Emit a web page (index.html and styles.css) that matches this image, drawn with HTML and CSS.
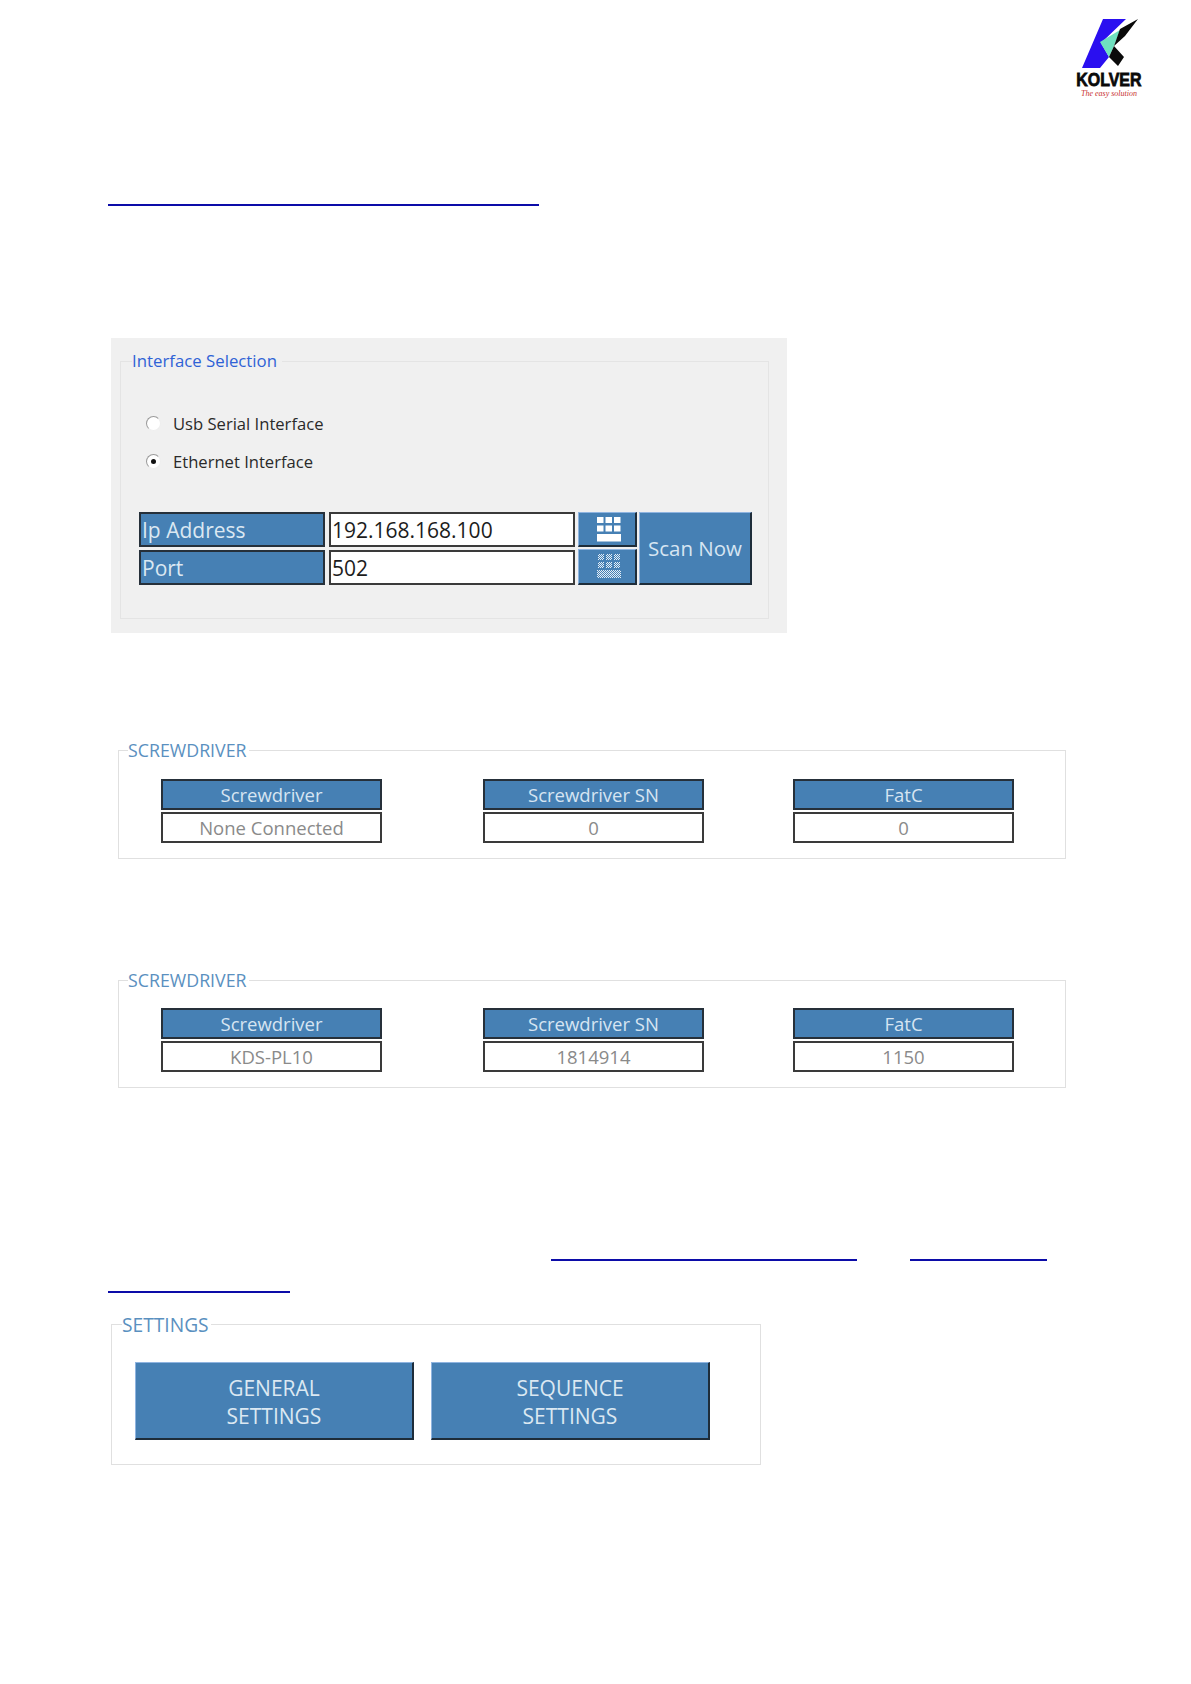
FILE: index.html
```html
<!DOCTYPE html>
<html lang="en">
<head>
<meta charset="utf-8">
<title>Kolver</title>
<link rel="stylesheet" href="styles.css">
</head>
<body>
<header class="top">
  <div class="logo">
    <svg class="logo-mark" viewBox="0 0 60 50" width="60" height="50">
      <polygon points="21,0 44,0 19,24 27,38 18,49 0,49" fill="#2a0ff0"/>
      <polygon points="38,11 18,23 27,38 32,27" fill="#6fe0bf"/>
      <polygon points="56,0 38,10 32,27 27,38 36,47 42,38 32,27 43,17" fill="#0a0a0a"/>
    </svg>
    <div class="logo-name">KOLVER</div>
    <div class="logo-tag">The easy solution</div>
  </div>
</header>

<div class="rule rule-first"></div>

<section class="panel">
  <fieldset class="box box-iface">
    <legend class="legend-iface">Interface Selection</legend>
    <div class="radio radio-a"><span class="dot"></span>Usb Serial Interface</div>
    <div class="radio radio-b"><span class="dot dot-on"></span>Ethernet Interface</div>
    <div class="net">
      <div class="net-label net-ip">Ip Address</div>
      <div class="net-input net-ipv">192.168.168.100</div>
      <div class="kb kb-on">
        <svg viewBox="0 0 26 26" width="26" height="26" fill="#fff">
          <rect x="1" y="1" width="6.5" height="6"/><rect x="9.5" y="1" width="6.5" height="6"/><rect x="18" y="1" width="6.5" height="6"/>
          <rect x="1" y="9.5" width="6.5" height="6"/><rect x="9.5" y="9.5" width="6.5" height="6"/><rect x="18" y="9.5" width="6.5" height="6"/>
          <rect x="1" y="18" width="24" height="7.5"/>
        </svg>
      </div>
      <div class="scan">Scan Now</div>
      <div class="net-label net-port">Port</div>
      <div class="net-input net-portv">502</div>
      <div class="kb kb-off">
        <svg viewBox="0 0 26 26" width="26" height="26">
          <defs>
            <pattern id="stipple" width="2" height="2" patternUnits="userSpaceOnUse">
              <rect width="1" height="1" fill="#e4eef6"/>
              <rect x="1" y="1" width="1" height="1" fill="#e4eef6"/>
            </pattern>
          </defs>
          <g fill="url(#stipple)">
            <rect x="2" y="1" width="6" height="6"/><rect x="10" y="1" width="6" height="6"/><rect x="18" y="1" width="6" height="6"/>
            <rect x="2" y="9" width="6" height="6"/><rect x="10" y="9" width="6" height="6"/><rect x="18" y="9" width="6" height="6"/>
            <rect x="1" y="17" width="24" height="8"/>
          </g>
        </svg>
      </div>
    </div>
  </fieldset>
</section>

<fieldset class="box box-sd box-sd-first">
  <legend class="legend-sd">SCREWDRIVER</legend>
  <div class="sd-row">
    <div class="cell"><div class="cell-head">Screwdriver</div><div class="cell-val">None Connected</div></div>
    <div class="cell"><div class="cell-head">Screwdriver SN</div><div class="cell-val">0</div></div>
    <div class="cell"><div class="cell-head">FatC</div><div class="cell-val">0</div></div>
  </div>
</fieldset>

<fieldset class="box box-sd box-sd-second">
  <legend class="legend-sd">SCREWDRIVER</legend>
  <div class="sd-row sd-row-second">
    <div class="cell"><div class="cell-head">Screwdriver</div><div class="cell-val">KDS-PL10</div></div>
    <div class="cell"><div class="cell-head">Screwdriver SN</div><div class="cell-val">1814914</div></div>
    <div class="cell"><div class="cell-head">FatC</div><div class="cell-val">1150</div></div>
  </div>
</fieldset>

<div class="rule-pair">
  <div class="rule rule-b"></div>
  <div class="rule rule-c"></div>
</div>
<div class="rule rule-d"></div>

<fieldset class="box box-set">
  <legend class="legend-set">SETTINGS</legend>
  <div class="set-row">
    <div class="set-btn">GENERAL<br>SETTINGS</div>
    <div class="set-btn">SEQUENCE<br>SETTINGS</div>
  </div>
</fieldset>
</body>
</html>
```

FILE: styles.css
```css
* { box-sizing: border-box; }
html, body { margin: 0; padding: 0; background: #fff; }
body { width: 1191px; height: 1684px; overflow: hidden; font-family: "Open Sans", "Noto Sans", sans-serif; color: #222; }

.top { display: flex; justify-content: flex-end; height: 100px; padding: 19px 49px 0 0; }
.logo { width: 66px; display: flex; flex-direction: column; align-items: center; }
.logo-mark { display: block; margin-left: 6px; }
.logo-name { font-family: "Liberation Sans", sans-serif; font-weight: 700; font-size: 19px; line-height: 18px; color: #0a0a0a; margin-top: 2px; -webkit-text-stroke: .8px #0a0a0a; white-space: nowrap; transform: scaleX(.84); }
.logo-tag { font-family: "Liberation Serif", serif; font-style: italic; font-size: 8px; line-height: 9px; color: #c8302e; white-space: nowrap; }

.rule { height: 2px; background: #0c0ca8; }
.rule-first { width: 431px; height: 1.5px; margin: 104px 0 0 108px; }
.rule-pair { display: flex; margin: 171px 0 0 551px; }
.rule-b { width: 306px; }
.rule-c { width: 137px; margin-left: 53px; }
.rule-d { width: 182px; margin: 30px 0 0 108px; }

.panel { width: 676px; height: 295px; margin: 132px 0 0 111px; padding: 12px 18px 0 9px; background: #f0f0f0; }

.box { margin: 0; min-width: 0; border: 1px solid #e0e0e0; }
.box-iface { height: 269px; padding: 0 18px; border-color: #e4e4e4; }
.legend-iface { margin-left: -7px; padding: 0 5px 2px 0; font-size: 16.8px; line-height: 22px; color: #2f62d6; }

.radio { display: flex; align-items: center; height: 24px; font-size: 16.6px; color: #2a2a2a; }
.radio-a { margin-top: 38px; }
.radio-b { margin-top: 14px; }
.dot { position: relative; width: 15px; height: 15px; margin: 0 12px 0 7px; border-radius: 50%; background: #fff; border: 1px solid #9a9a9a; border-right-color: #eee; border-bottom-color: #eee; }
.dot-on::after { content: ""; position: absolute; left: 4px; top: 4px; width: 5px; height: 5px; border-radius: 50%; background: #111; }

.net { display: grid; grid-template-columns: 186px 250px 62px 115px; grid-template-rows: 35px 35px; row-gap: 3px; margin-top: 38px; }
.net-label { background: #4680b4; border: 2px solid #26303a; color: #dbe8f2; font-size: 21px; line-height: 32px; padding-left: 1px; }
.net-input { background: #fff; border: 2px solid #3a3a3a; color: #1c1c1c; font-size: 21px; line-height: 32px; padding-left: 1px; margin-left: 4px; }
.kb { display: flex; align-items: center; justify-content: center; padding-left: 4px; background: #4680b4; border: 1px solid #4680b4; border-top-color: #8fb4e0; border-left-color: #8fb4e0; border-right: 2px solid #1e2d3a; border-bottom: 2px solid #1e2d3a; margin-left: 3px; }
.kb-off { margin-top: -1px; }
.scan { grid-row: 1 / span 2; grid-column: 4; display: flex; align-items: center; justify-content: center; margin-left: 2px; background: #4680b4; border-top: 1px solid #8fb4e0; border-left: 1px solid #8fb4e0; border-right: 2px solid #1e2d3a; border-bottom: 2px solid #1e2d3a; color: #d6e5f2; font-size: 20.5px; }
.net-ip, .net-ipv, .kb-on { grid-row: 1; }
.net-port, .net-portv, .kb-off { grid-row: 2; }

.box-sd { width: 948px; height: 120px; margin-left: 118px; padding: 0 0 0 42px; }
.box-sd-first { margin-top: 106px; }
.box-sd-second { margin-top: 110px; height: 119px; }
.legend-sd { margin-left: -33px; padding: 0 2px 2px 0; font-size: 17.8px; line-height: 22px; color: #5a90c0; }
.sd-row { display: flex; margin-top: 16px; }
.sd-row-second { margin-top: 15px; }
.cell { width: 221px; }
.cell:nth-child(2) { margin-left: 101px; }
.cell:nth-child(3) { margin-left: 89px; }
.cell-head { height: 31px; background: #4680b4; border: 2px solid #26303a; color: #d6e5f2; font-size: 18.5px; line-height: 28px; text-align: center; }
.cell-val { height: 31px; margin-top: 2px; background: #fff; border: 2px solid #3a3a3a; color: #8a8a8a; font-size: 18.5px; line-height: 27px; text-align: center; }

.box-set { width: 650px; height: 152px; margin: 20px 0 0 111px; padding: 0 0 0 23px; }
.legend-set { margin-left: -13px; padding: 0 2px 0 0; font-size: 19.2px; line-height: 24px; color: #5a90c0; }
.set-row { display: flex; gap: 17px; margin-top: 25px; }
.set-btn { width: 279px; height: 78px; background: #4680b4; border-top: 1px solid #8fb4e0; border-left: 1px solid #8fb4e0; border-right: 2px solid #1e2d3a; border-bottom: 2px solid #1e2d3a; color: #dbe8f2; font-size: 21px; line-height: 28.5px; text-align: center; padding-top: 11px; }
```
